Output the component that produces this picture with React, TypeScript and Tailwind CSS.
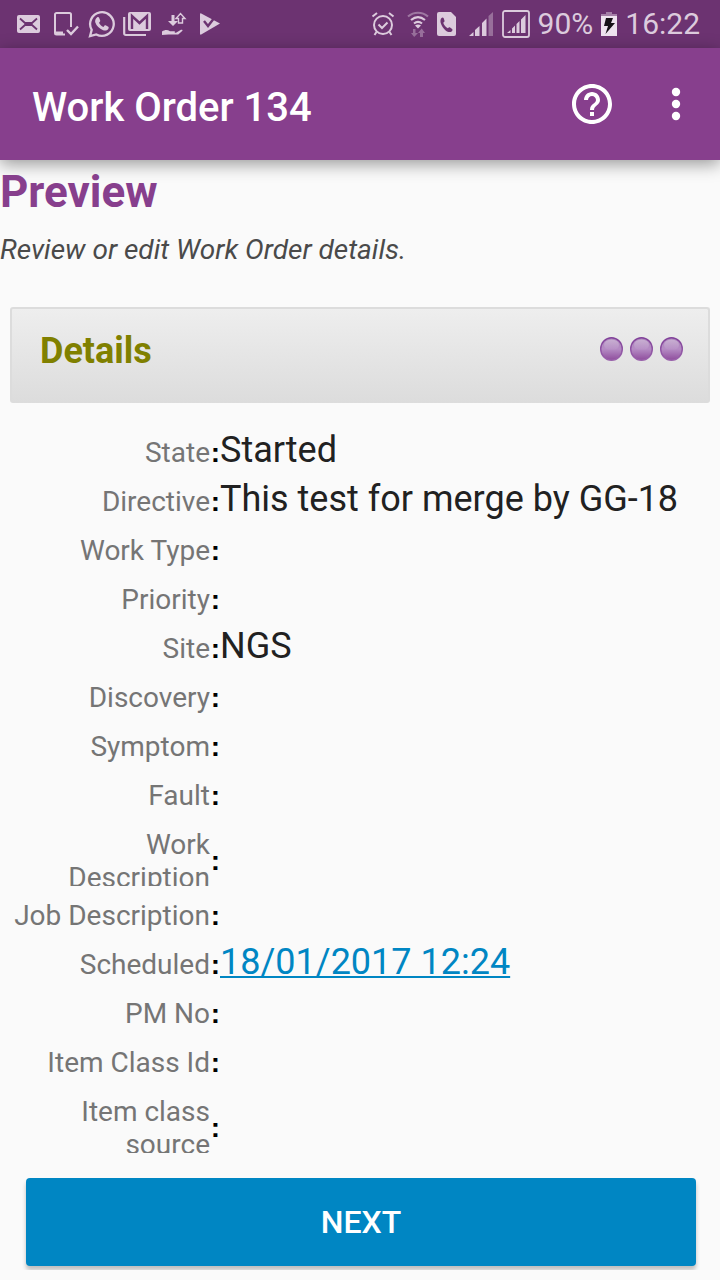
import React from 'react';

type Field = { label: string; value?: string; link?: boolean; twoLines?: boolean };

const fields: Field[] = [
  { label: 'State', value: 'Started' },
  { label: 'Directive', value: 'This test for merge by GG-18' },
  { label: 'Work Type' },
  { label: 'Priority' },
  { label: 'Site', value: 'NGS' },
  { label: 'Discovery' },
  { label: 'Symptom' },
  { label: 'Fault' },
  { label: 'Work Description', twoLines: true },
  { label: 'Job Description' },
  { label: 'Scheduled', value: '18/01/2017 12:24', link: true },
  { label: 'PM No' },
  { label: 'Item Class Id' },
  { label: 'Item class source', twoLines: true },
];

function StatusBar() {
  return (
    <div className="flex h-12 items-center justify-between bg-[#6c3371] pl-4 pr-5 text-[#dccbdd]">
      <div className="flex items-center gap-2">
        <svg width="26" height="28" viewBox="0 0 26 28" aria-hidden="true">
          <rect x="1" y="5" width="23" height="18" rx="2" fill="currentColor" />
          <path d="M4 8.500L9 13h7l5-4.500M4 19.500L9 15h7l5 4.500" fill="none" stroke="#6c3371" strokeWidth="1.800" />
        </svg>
        <svg className="ml-1" width="26" height="28" viewBox="0 0 26 28" aria-hidden="true">
          <path d="M11 24.500H2.500a1.500 1.500 0 0 1-1.500-1.500V4.500A1.500 1.500 0 0 1 2.500 3h13A1.500 1.500 0 0 1 17 4.500V17" fill="none" stroke="currentColor" strokeWidth="2" />
          <path d="M2 21.500h7v3H2z" fill="currentColor" />
          <path d="M13 20l4 4 7-7.500" fill="none" stroke="currentColor" strokeWidth="2.400" />
        </svg>
        <svg width="27" height="28" viewBox="0 0 27 28" aria-hidden="true">
          <path d="M2 26.200l1.700-6.300a11.800 11.800 0 1 1 4.600 4.500z" fill="none" stroke="currentColor" strokeWidth="2.300" />
          <path d="M9 7.500c.6-.6 1.700-.6 2 .1l1.200 2.800c.2.500 0 1-1.200 2.300.8 1.800 2.400 3.400 4.400 4.200 1.400-1.700 1.500-1.900 2.200-1.600l2.700 1.400c.6.3.5 1.700-.2 2.600-1 1.200-3 1.700-5 .9-3.800-1.300-6.600-4.200-7.800-7.600-.6-1.900.2-3.700 1.700-5.100z" fill="currentColor" />
        </svg>
        <svg width="30" height="28" viewBox="0 0 30 28" aria-hidden="true">
          <path d="M1.200 7v16.500a1.500 1.500 0 0 0 1.500 1.500H23" fill="none" stroke="currentColor" strokeWidth="2.200" />
          <rect x="5" y="2" width="23" height="19" rx="2" fill="currentColor" />
          <path d="M9 19V6l7.500 7L24 6v13" fill="none" stroke="#6c3371" strokeWidth="2.400" />
        </svg>
        <svg width="26" height="28" viewBox="0 0 26 28" aria-hidden="true">
          <path d="M10.500 5h3v6h3.500l-5 5-5-5h3.500z" fill="currentColor" />
          <path d="M17.500 13V8.500h-2.500l4.500-5 4.500 5h-2.500V13z" fill="none" stroke="currentColor" strokeWidth="1.400" />
          <path d="M1 21.500c3-2 5.500-2 8-.2h4c1.500 0 1.500 1.300 0 1.500h2l5-3c1.200-.5 2 .4 1.200 1.300l-4 3.400H7.500L1 25z" fill="currentColor" />
        </svg>
        <svg className="ml-1" width="22" height="28" viewBox="0 0 22 28" aria-hidden="true">
          <path d="M2.200 3.500L21 13.500 2.200 24.500C1 25 1 24 1 23.500v-19c0-.9.500-1.400 1.200-1z" fill="currentColor" />
          <path d="M5 11l4 5 8.500-11" fill="none" stroke="#6c3371" strokeWidth="2.400" />
        </svg>
      </div>
      <div className="flex items-center gap-2">
        <svg width="24" height="28" viewBox="0 0 24 28" aria-hidden="true">
          <g fill="none" stroke="currentColor" strokeWidth="2">
            <circle cx="12" cy="15" r="9" />
            <path d="M7.500 14.500l3.500 3.500 5.500-5.500M5.500 22l-2 3M18.500 22l2 3" />
            <path d="M1.500 6.500L6 3M22.500 6.500L18 3" />
          </g>
        </svg>
        <svg className="ml-1" width="22" height="28" viewBox="0 0 22 28" aria-hidden="true">
          <g fill="none" stroke="currentColor" strokeWidth="2.200">
            <path d="M1 6.500c6-5 14-5 20 0" opacity=".45" />
            <path d="M4 10c4.500-3.600 9.500-3.600 14 0M7 13.500c2.500-2 5.500-2 8 0" />
          </g>
          <path d="M8 15.500c2-1.500 4-1.500 6 0l-3 3z" fill="currentColor" />
          <path d="M6 19h2.500v4H11l-3.800 4L4 23h2zM13 27v-4h-2l3.700-4.500 3.300 4.500h-2v4z" fill="currentColor" opacity=".4" />
        </svg>
        <svg width="20" height="28" viewBox="0 0 20 28" aria-hidden="true">
          <path d="M2 2h12l5 5v17a2 2 0 0 1-2 2H2a2 2 0 0 1-2-2V4a2 2 0 0 1 2-2z" fill="currentColor" />
          <path d="M4.500 8c.7-.7 1.800-.7 2.200.2l.8 2.600c.2.600-.3 1.200-1.300 2 .9 2.500 2.500 4.300 4.600 5.500 1-1 1.600-1.400 2.300-.9l2 1.600c.8.7.3 1.900-.5 2.500-1.700 1.200-4 .5-6-1.100-2.400-2-4-4.600-4.900-7.400-.5-2-.3-3.900.8-5z" fill="#6c3371" />
        </svg>
        <svg className="ml-1" width="25" height="28" viewBox="0 0 25 28" aria-hidden="true">
          <path d="M0 26l4.500-4v4zM6 20l4.500-4v10H6zM13 13l4.500-4.500V26H13z" fill="currentColor" />
          <path d="M19.500 6L24 2v24h-4.500z" fill="currentColor" opacity=".4" />
        </svg>
        <svg width="28" height="28" viewBox="0 0 28 28" aria-hidden="true">
          <rect x="1" y="1" width="26" height="26" rx="2" fill="none" stroke="currentColor" strokeWidth="1.800" />
          <path d="M5 23l3.500-3v3zM10 18.500l3-3V23h-3zM14.500 14l3-3v12h-3zM19 9.500L23.500 5v18H19z" fill="currentColor" />
        </svg>
        <span className="text-[30px] leading-9">90%</span>
        <svg width="16" height="28" viewBox="0 0 16 28" aria-hidden="true">
          <path d="M0 6V4h5V2h6v2h5v2z" fill="currentColor" opacity=".5" />
          <path d="M0 6h16v20H0z" fill="#eee3ef" />
          <path d="M5 8h7l-2 5h4L4.500 24l2.500-8H3z" fill="#161117" />
        </svg>
        <span className="text-[30px] leading-9">16:22</span>
      </div>
    </div>
  );
}

export default function App() {
  return (
    <div className="flex min-h-screen flex-col bg-[#fafafa] font-['Roboto',sans-serif]">
      <StatusBar />
      <header className="flex h-28 items-center justify-between bg-[#873f8d] pl-8 pr-8 text-white shadow-[0_4px_16px_rgba(0,0,0,0.4)]">
        <h1 className="pt-2 text-[40px] font-medium leading-12">Work Order 134</h1>
        <div className="flex items-center gap-12">
          <button type="button" aria-label="Help">
            <svg width="48" height="48" viewBox="0 0 24 24" fill="currentColor">
              <path d="M11 18h2v-2h-2v2zm1-16C6.480 2 2 6.480 2 12s4.480 10 10 10 10-4.480 10-10S17.520 2 12 2zm0 18c-4.410 0-8-3.590-8-8s3.590-8 8-8 8 3.590 8 8-3.590 8-8 8zm0-14c-2.210 0-4 1.790-4 4h2c0-1.100.9-2 2-2s2 .9 2 2c0 2-3 1.750-3 5h2c0-2.250 3-2.500 3-5 0-2.210-1.790-4-4-4z" />
            </svg>
          </button>
          <button type="button" aria-label="More options">
            <svg width="24" height="48" viewBox="0 0 24 48" fill="currentColor">
              <circle cx="12" cy="12" r="4.200" />
              <circle cx="12" cy="24" r="4.200" />
              <circle cx="12" cy="36" r="4.200" />
            </svg>
          </button>
        </div>
      </header>
      <main className="flex flex-col">
        <h2 className="pt-1 text-[44px] font-bold leading-14 text-[#873f8d]">Preview</h2>
        <p className="pt-3 text-[28px] italic leading-9 text-[#4a4a4a]">Review or edit Work Order details.</p>
        <section className="mt-[39px] flex flex-col">
          <div className="mx-[10px] flex h-24 items-start justify-between rounded-[3px] border-2 border-b-0 border-[#dcdcdc] bg-linear-to-b from-[#eeeeee] to-[#dcdcdc] pl-7 pr-6 pt-5">
            <h3 className="text-[36px] font-bold leading-11 text-[#808000]">Details</h3>
            <button type="button" aria-label="Details actions" className="flex h-10 items-center">
              <svg width="84" height="24" viewBox="0 0 84 24">
                <defs>
                  <linearGradient id="bead" x1="0" y1="0" x2="0" y2="1">
                    <stop offset="0" stopColor="#a983b8" />
                    <stop offset=".5" stopColor="#b58cc4" />
                    <stop offset="1" stopColor="#8e4c9c" />
                  </linearGradient>
                  <linearGradient id="rim" x1="0" y1="0" x2="0" y2="1">
                    <stop offset="0" stopColor="#81419a" />
                    <stop offset="1" stopColor="#9a62ab" />
                  </linearGradient>
                  <linearGradient id="gloss" x1="0" y1="0" x2="0" y2="1">
                    <stop offset="0" stopColor="#ffffff" stopOpacity=".35" />
                    <stop offset="1" stopColor="#ffffff" stopOpacity="0" />
                  </linearGradient>
                </defs>
                {[11.5, 41.5, 71.5].map((x) => (
                  <g key={x}>
                    <ellipse cx={x} cy="12" rx="10.800" ry="11.300" fill="url(#bead)" stroke="url(#rim)" strokeWidth="1.400" />
                    <ellipse cx={x} cy="8" rx="7.500" ry="5.500" fill="url(#gloss)" />
                  </g>
                ))}
              </svg>
            </button>
          </div>
          <dl className="mt-[26px] flex flex-col">
            {fields.map(({ label, value, link, twoLines }) => (
              <div
                key={label}
                className={`flex items-start overflow-hidden ${twoLines ? 'mb-[6px] h-[65px]' : 'mb-[5px] h-11'}`}
              >
                <dt className="w-[210px] shrink-0 pt-[7px] text-right text-[28px] leading-[33px] text-[#757575]">{label}</dt>
                <span
                  className={`w-[10px] shrink-0 text-right font-['Liberation_Sans',sans-serif] text-[28px] font-bold leading-[33px] text-black ${twoLines ? 'pt-[23px]' : 'pt-[7px]'}`}
                  aria-hidden="true"
                >
                  :
                </span>
                <dd className="text-[36px] leading-[42px] text-[#212121]">
                  {link ? (
                    <a href="#schedule" className="text-[#0086c3] underline decoration-2 underline-offset-2">{value}</a>
                  ) : (
                    value
                  )}
                </dd>
              </div>
            ))}
          </dl>
        </section>
      </main>
      <footer className="overflow-hidden pb-1 pl-[26px] pr-6 pt-[19px]">
        <button type="button" className="h-[88px] w-full rounded-[4px] bg-[#0086c3] text-[32px] font-medium leading-10 text-white shadow-[0_4px_4px_rgba(0,0,0,0.24)]">
          NEXT
        </button>
      </footer>
    </div>
  );
}
